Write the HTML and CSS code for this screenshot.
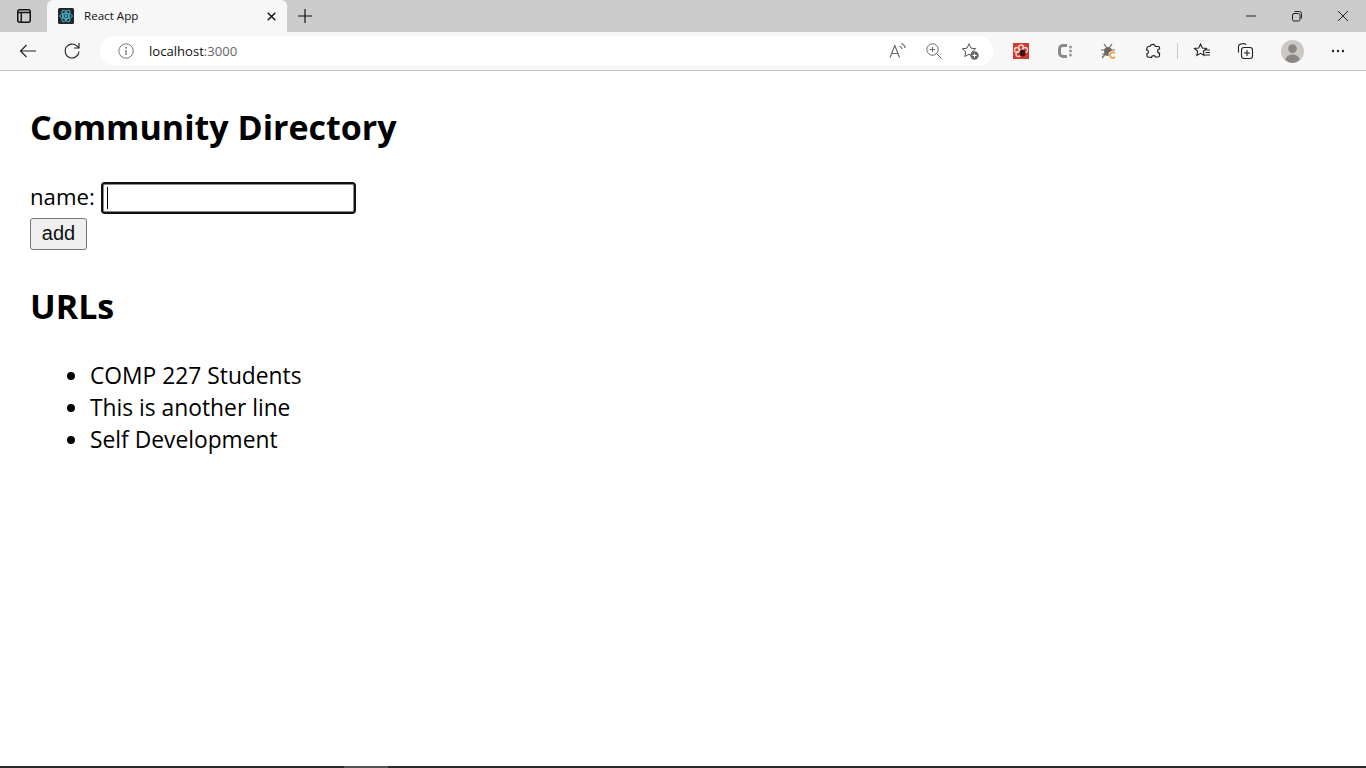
FILE: index.html
```html
<!DOCTYPE html>
<html lang="en">
<head>
<meta charset="utf-8">
<title>React App</title>
<link rel="stylesheet" href="styles.css">
</head>
<body>
<div class="browser">
  <div class="tabstrip">
    <button class="chrome-btn side-btn" aria-label="Tabs">
      <svg width="16" height="16" viewBox="0 0 16 16"><rect x="1.75" y="1.75" width="12.5" height="12.500" rx="2" fill="none" stroke="#111" stroke-width="1.5"/><path d="M2 4.500h12M5.250 4v10" stroke="#111" stroke-width="1.400" fill="none"/></svg>
    </button>
    <div class="tab">
      <svg class="favicon" width="16" height="16" viewBox="0 0 16 16"><rect width="16" height="16" rx="1.5" fill="#20272b"/><g fill="none" stroke="#4fb3cf" stroke-width="1"><ellipse cx="8" cy="8" rx="6.3" ry="2.6"/><ellipse cx="8" cy="8" rx="6.3" ry="2.6" transform="rotate(60 8 8)"/><ellipse cx="8" cy="8" rx="6.3" ry="2.6" transform="rotate(120 8 8)"/></g><circle cx="8" cy="8" r="1.4" fill="#4fb3cf"/></svg>
      <span class="tab-title">React App</span>
      <svg class="tab-close" width="9" height="9" viewBox="0 0 9 9"><path d="M.7.7l7.600 7.600M8.300.7L.7 8.300" stroke="#111" stroke-width="1.400"/></svg>
    </div>
    <svg class="new-tab" width="14" height="14" viewBox="0 0 14 14"><path d="M7 0v14M0 7h14" stroke="#111" stroke-width="1.2"/></svg>
    <div class="window-controls">
      <svg width="46" height="16" viewBox="0 0 46 16"><path d="M18 8h10" stroke="#222" stroke-width="1"/></svg>
      <svg width="46" height="16" viewBox="0 0 46 16"><rect x="18.5" y="5.5" width="7.5" height="7.5" rx="1.5" fill="none" stroke="#222"/><path d="M20.5 3.5h5a2 2 0 0 1 2 2v5" fill="none" stroke="#222"/></svg>
      <svg width="46" height="16" viewBox="0 0 46 16"><path d="M18 3l10 10M28 3l-10 10" stroke="#222" stroke-width="1"/></svg>
    </div>
  </div>
  <div class="toolbar">
    <svg class="nav-back" width="18" height="14" viewBox="0 0 18 14"><path d="M17 7H1.500M7.500 1L1.500 7l6 6" fill="none" stroke="#222" stroke-width="1.100"/></svg>
    <svg class="nav-reload" width="18" height="18" viewBox="0 0 18 18"><path d="M16 9.500a7 7 0 1 1-2.200-5.600L16 6" fill="none" stroke="#222" stroke-width="1.100"/><path d="M16 1v5h-5" fill="none" stroke="#222" stroke-width="1.100"/></svg>
    <div class="address-bar">
      <svg class="info" width="16" height="16" viewBox="0 0 16 16"><circle cx="8" cy="8" r="7.200" fill="none" stroke="#777" stroke-width="1"/><path d="M8 7v5" stroke="#666" stroke-width="1.200"/><circle cx="8" cy="4.800" r=".9" fill="#666"/></svg>
      <span class="url">localhost<span class="url-port">:3000</span></span>
      <div class="address-actions">
        <svg width="18" height="18" viewBox="0 0 18 18"><path d="M1 15.500L5.800 3.500l4.800 12M2.800 11.500h6" fill="none" stroke="#666" stroke-width="1.100"/><path d="M10.500 4c1.500.6 2.400 1.700 2.700 3.200M12.300 1.500c2.200.8 3.500 2.500 3.900 4.700" fill="none" stroke="#666" stroke-width="1.100"/></svg>
        <svg width="18" height="18" viewBox="0 0 18 18"><circle cx="7.500" cy="7.500" r="5.700" fill="none" stroke="#666"/><path d="M11.700 11.700l5 5M7.500 5v5M5 7.500h5" fill="none" stroke="#666"/></svg>
        <svg width="18" height="18" viewBox="0 0 18 18"><path d="M8 1.800l2 4.400 4.700.5-3.500 3.200 1 4.600L8 12.300 3.800 14.500l1-4.600L1.300 6.700 6 6.200z" fill="none" stroke="#555"/><circle cx="13.500" cy="13.500" r="4.200" fill="#666"/><path d="M13.500 11.500v4M11.500 13.500h4" stroke="#fff"/></svg>
      </div>
    </div>
    <div class="extensions">
      <svg class="ext" width="16" height="16" viewBox="0 0 16 16"><rect width="16" height="16" fill="#d5392c"/><g fill="none" stroke="#f5d5d0" stroke-width="1.300"><circle cx="8" cy="4.500" r="2.500"/><circle cx="4" cy="7" r="2.500"/><circle cx="12" cy="7" r="2.500"/><circle cx="5.500" cy="11" r="2.500"/></g><ellipse cx="9.500" cy="10" rx="3" ry="3.500" fill="#3a1512"/></svg>
      <svg class="ext" width="16" height="16" viewBox="0 0 16 16"><path d="M10 2.500H6A3.500 3.500 0 0 0 2.500 6v4A3.500 3.500 0 0 0 6 13.500h4" fill="none" stroke="#8a8a8a" stroke-width="3"/><circle cx="13.500" cy="4" r="1.500" fill="#999"/><circle cx="13.500" cy="8" r="1.500" fill="#999"/><circle cx="13.500" cy="12" r="1.500" fill="#999"/></svg>
      <svg class="ext" width="16" height="16" viewBox="0 0 16 16"><ellipse cx="7" cy="8.500" rx="4" ry="4.500" fill="#6c6660"/><path d="M3 1l2.500 3.500M11 1L8.500 4.500M0 7h4M10 7h4M1 15l3-3.500M1 11h3" stroke="#6c6660" stroke-width="1.200"/><circle cx="11.500" cy="12" r="4" fill="#f7f7f7"/><path d="M14 10.200a2.900 2.900 0 1 0 0 3.800" fill="none" stroke="#ef9a28" stroke-width="1.600"/></svg>
      <svg class="ext" width="16" height="16" viewBox="0 0 16 16"><path d="M5 3.500C5.500 1 10 .5 10.500 3.500L13.500 3.500Q14.500 3.500 14.500 4.500L14.500 6C12 6 12 10 14.500 10L14.500 12.500Q14.500 14 13 14L10.500 14C10.500 12 6.500 12 6.500 14.500L3 14Q2 14 2 12.500L2 10.500C4 10.500 4 7 1.500 7L2 5Q2 3.500 3.500 3.500Z" fill="none" stroke="#222" stroke-width="1.200"/></svg>
      <span class="toolbar-divider"></span>
      <svg class="ext ext-star" width="18" height="18" viewBox="0 0 18 18"><path d="M7.500 2l1.800 4 4.200.4-3.200 2.900.9 4.200-3.700-2.200-3.700 2.200.9-4.200L1.500 6.400l4.200-.4z" fill="none" stroke="#222" stroke-width="1.100"/><path d="M12 8h5M12.500 10.500h4.500M12 13h5" stroke="#222"/></svg>
      <svg class="ext ext-collections" width="18" height="18" viewBox="0 0 18 18"><path d="M2.500 10.500V4.500a2.500 2.500 0 0 1 2-2.400l3.500-.6c1 0 1.700.6 2 1.500" fill="none" stroke="#222" stroke-width="1.100"/><rect x="5.500" y="5.500" width="11" height="11" rx="2.500" fill="none" stroke="#222" stroke-width="1.100"/><path d="M11 8v6M8 11h6" stroke="#222" stroke-width="1.100"/></svg>
      <svg class="avatar" width="23" height="23" viewBox="0 0 24 24"><circle cx="12" cy="12" r="12" fill="#ccc8c4"/><circle cx="12" cy="9" r="4.500" fill="#8c8782"/><path d="M4.500 20.500c1-4 4-5.500 7.500-5.500s6.500 1.500 7.500 5.500A12 12 0 0 1 12 24a12 12 0 0 1-7.500-3.500z" fill="#8c8782"/></svg>
      <svg class="more" width="14" height="4" viewBox="0 0 14 4"><circle cx="2" cy="2" r="1.200" fill="#222"/><circle cx="7" cy="2" r="1.200" fill="#222"/><circle cx="12" cy="2" r="1.200" fill="#222"/></svg>
    </div>
  </div>
  <main class="page">
    <h1 class="title">Community Directory</h1>
    <form class="entry-form">
      <div class="field">
        <label class="field-label" for="name">name:</label>
        <span class="fake-input" id="name"><span class="caret"></span></span>
      </div>
      <button class="add-btn" type="button">add</button>
    </form>
    <h2 class="subtitle">URLs</h2>
    <ul class="url-list">
      <li>COMP 227 Students</li>
      <li>This is another line</li>
      <li>Self Development</li>
    </ul>
  </main>
  <div class="taskbar-edge"><span class="taskbar-active"></span></div>
</div>
</body>
</html>
```
FILE: styles.css
```css
* { box-sizing: border-box; }
html, body { margin: 0; height: 100%; }
body { background: #fff; overflow: hidden; font-family: "Open Sans", "Noto Sans", sans-serif; }
.browser { height: 768px; display: flex; flex-direction: column; }

.tabstrip { height: 32px; background: #cccccc; display: flex; align-items: flex-end; flex: none; }
.chrome-btn { border: 0; background: none; padding: 0; }
.side-btn { width: 47px; height: 32px; display: flex; align-items: center; justify-content: center; }
.tab { width: 240px; height: 32px; background: #f7f7f7; border-radius: 6px 6px 0 0; display: flex; align-items: center; padding: 0 11px; }
.favicon { flex: none; }
.tab-title { margin: 0 0 2px 10px; font-size: 11.6px; color: #111; flex: 1; }
.tab-close { flex: none; }
.new-tab { margin: 0 0 9px 11px; flex: none; }
.window-controls { margin-left: auto; height: 32px; display: flex; align-items: center; }

.toolbar { height: 39px; background: #f7f7f7; border-bottom: 1px solid #c4c4c4; display: flex; align-items: center; flex: none; }
.nav-back { margin-left: 19px; flex: none; }
.nav-reload { margin-left: 26px; flex: none; }
.address-bar { margin-left: 19px; width: 893px; height: 30px; background: #fff; border-radius: 15px; display: flex; align-items: center; padding: 0 14px 0 18px; flex: none; }
.info { flex: none; }
.url { margin-left: 15px; font-size: 13.1px; color: #111; }
.url-port { color: #666; }
.address-actions { margin-left: auto; display: flex; gap: 18px; align-items: center; }
.extensions { display: flex; align-items: center; margin-left: 20px; }
.ext { flex: none; margin-right: 28px; }
.ext:nth-of-type(4) { margin-right: 16px; }
.toolbar-divider { width: 1px; height: 16px; background: #c8c8c8; margin-right: 15px; }
.ext-star { margin-right: 25px; }
.ext-collections { margin-right: 27px; }
.avatar { flex: none; margin-right: 27px; }
.more { flex: none; }

.page { flex: 1; padding: 0 30px; color: #000; }
.title { margin: 30px 0 0; font-size: 34px; line-height: 52px; font-weight: 700; }
.entry-form { margin-top: 29px; }
.field { display: flex; align-items: center; height: 32px; }
.field-label { font-size: 22.2px; line-height: 32px; margin-bottom: 2px; }
.fake-input { margin-left: 6px; width: 255px; height: 32px; border: 2px solid #101010; border-radius: 4px; background: #fff; box-shadow: inset 0 0 0 1px #8a8a8a; display: flex; align-items: center; padding-left: 4px; }
.caret { width: 1px; height: 22px; background: #000; }
.add-btn { display: block; margin-top: 4px; width: 57px; height: 32px; padding: 0 0 2px; font: 20px "Liberation Sans", Arial, sans-serif; color: #111; background: #efefef; border: 1px solid #767676; border-radius: 3px; }
.subtitle { margin: 30px 0 0; font-size: 34px; line-height: 52px; font-weight: 700; }
.url-list { margin: 28px 0 0; padding: 0 0 0 60px; font-size: 22.8px; line-height: 32px; }

.taskbar-edge { height: 2px; background: #2a2a2a; flex: none; display: flex; }
.taskbar-active { margin-left: 344px; width: 44px; background: #555; }
```
